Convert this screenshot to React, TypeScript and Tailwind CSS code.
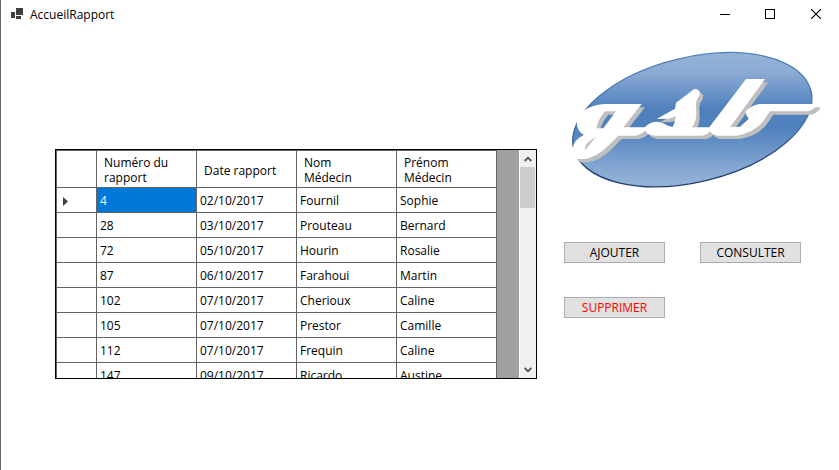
import React from 'react';

interface Rapport {
  numero: number;
  date: string;
  nom: string;
  prenom: string;
}

const rapports: Rapport[] = [
  { numero: 4, date: '02/10/2017', nom: 'Fournil', prenom: 'Sophie' },
  { numero: 28, date: '03/10/2017', nom: 'Prouteau', prenom: 'Bernard' },
  { numero: 72, date: '05/10/2017', nom: 'Hourin', prenom: 'Rosalie' },
  { numero: 87, date: '06/10/2017', nom: 'Farahoui', prenom: 'Martin' },
  { numero: 102, date: '07/10/2017', nom: 'Cherioux', prenom: 'Caline' },
  { numero: 105, date: '07/10/2017', nom: 'Prestor', prenom: 'Camille' },
  { numero: 112, date: '07/10/2017', nom: 'Frequin', prenom: 'Caline' },
  { numero: 147, date: '09/10/2017', nom: 'Ricardo', prenom: 'Austine' }
];

const columns = ['Numéro du\nrapport', 'Date rapport', 'Nom\nMédecin', 'Prénom\nMédecin'];

// One outline is drawn twice: the grey copy below is the drop shadow
const LOGO_SHAPE =
  'M245 192 L140 192 Q110 192 85 204 Q50 220 50 246 Q50 274 72 284 Q36 304 39 326 Q40 350 52 357 L74 357 Q108 352 140 322 L175 287 L228 287 Q242 284 256 272 Q264 286 285 287 L425 287 Q442 286 450 274 Q456 286 475 287 L530 287 Q580 278 608 246 L630 214 L745 214 Q760 210 775 192 L598 192 Q572 196 556 216 Q560 222 560 228 Q566 232 565 238 L540 260 L510 262 L615 117 L558 117 L448 262 L396 262 Q408 246 409 225 L408 188 Q410 176 418 168 L420 156 Q412 144 402 148 L348 188 L345 206 L290 237 L325 236 Q336 234 347 228 Q346 248 338 261 Q322 258 308 249 Q280 238 254 262 L190 262 Z ' +
  'M135 214 L168 214 L130 265 L109 265 Q114 238 135 214 Z ' +
  'M108 290 L82 322 L75 330 Q70 312 108 290 Z';

const GsbLogo: React.FC = () => (
  <svg viewBox="30 24 750 426" className="h-[142px] w-[250px]" role="img" aria-label="gsb">
    <defs>
      <linearGradient id="oval" gradientUnits="userSpaceOnUse" x1="0" y1="36" x2="0" y2="440">
        <stop offset="0" stopColor="#95b3d7" />
        <stop offset="0.15" stopColor="#8cabd4" />
        <stop offset="0.42" stopColor="#4f81bd" />
        <stop offset="0.56" stopColor="#4f81bd" />
        <stop offset="0.9" stopColor="#8cabd4" />
        <stop offset="1" stopColor="#95b3d7" />
      </linearGradient>
      <linearGradient id="rim" gradientUnits="userSpaceOnUse" x1="0" y1="36" x2="0" y2="440">
        <stop offset="0" stopColor="#4f81bd" />
        <stop offset="0.5" stopColor="#4272ae" />
        <stop offset="0.8" stopColor="#1f4478" />
        <stop offset="1" stopColor="#1f3f6e" />
      </linearGradient>
    </defs>
    <path
      d="M41 325 A366 187 -13.6 0 1 753 153 A366 187 -13.6 0 1 41 325 Z"
      fill="url(#oval)"
      stroke="url(#rim)"
      strokeWidth="4" />
    <path d={LOGO_SHAPE} transform="translate(10 10)" fill="#bfbfbf" fillRule="evenodd" />
    <path d={LOGO_SHAPE} fill="#fff" fillRule="evenodd" />
  </svg>
);

const TitleBar: React.FC = () => (
  <header className="flex h-[30px] items-center justify-between pl-[10px]">
    <div className="flex items-center gap-[7px]">
      <svg viewBox="0 0 12 14" className="h-[14px] w-3" shapeRendering="crispEdges" fill="#404040">
        <path d="M5 0h7v7H5zM0 4h4v6H0zM5 8h5v3H5z" />
      </svg>
      <h1 className="text-xs">AccueilRapport</h1>
    </div>
    <div className="flex h-full">
      <button aria-label="Réduire" className="flex w-11 items-center justify-center">
        <svg viewBox="0 0 10 10" className="h-[10px] w-[10px]" shapeRendering="crispEdges">
          <path d="M0 4.5h10" stroke="#000" />
        </svg>
      </button>
      <button aria-label="Agrandir" className="flex w-[46px] items-center justify-center">
        <svg viewBox="0 0 10 10" className="mb-[2px] h-[10px] w-[10px]" shapeRendering="crispEdges">
          <path d="M.5.5h9v9h-9z" fill="none" stroke="#000" />
        </svg>
      </button>
      <button aria-label="Fermer" className="flex w-[46px] items-center justify-center">
        <svg viewBox="0 0 10 10" className="mb-[2px] h-[10px] w-[10px]">
          <path d="M0 0l10 10M10 0L0 10" stroke="#000" strokeWidth="1.2" />
        </svg>
      </button>
    </div>
  </header>
);

const ScrollBar: React.FC = () => (
  <div className="flex w-[17px] flex-col border-x border-l-white border-r-[#f0f0f0] bg-[#f0f0f0]">
    <button aria-label="Défiler vers le haut" className="flex h-[17px] items-center justify-center">
      <svg viewBox="0 0 8 6" className="h-[6px] w-2">
        <path d="M.7 5L4 1.7 7.3 5" fill="none" stroke="#505050" strokeWidth="1.8" />
      </svg>
    </button>
    <div className="h-[41px] bg-[#cdcdcd]" />
    <button aria-label="Défiler vers le bas" className="mt-auto flex h-[17px] items-center justify-center">
      <svg viewBox="0 0 8 6" className="h-[6px] w-2">
        <path d="M.7 1L4 4.3 7.3 1" fill="none" stroke="#505050" strokeWidth="1.8" />
      </svg>
    </button>
  </div>
);

const RapportGrid: React.FC = () => (
  <section className="flex h-[230px] w-[482px] border border-black bg-[#a0a0a0]">
    <div className="flex-1 overflow-hidden">
      <table className="w-[441px] table-fixed border-separate border-spacing-0 border-l border-t border-[#646464] bg-white text-left">
        <thead>
          <tr className="h-[37px]">
            <th className="w-10 border-b border-r border-[#646464]" />
            {columns.map((column) => (
              <th key={column} className="w-[100px] whitespace-pre-line border-b border-r border-[#646464] p-0 pl-[7px] pt-[2px] font-normal leading-[15px]">
                {column}
              </th>
            ))}
          </tr>
        </thead>
        <tbody>
          {rapports.map((rapport, index) => (
            <tr key={rapport.numero} className="h-[25px]">
              <td className="border-b border-r border-[#646464] p-0 pl-[6px] pt-[2px]">
                {index === 0 &&
                  <svg viewBox="0 0 5 9" className="h-[9px] w-[5px]">
                    <path d="M0 0l5 4.5L0 9z" fill="#404040" />
                  </svg>
                }
              </td>
              <td className={`border-b border-r border-[#646464] p-0 pl-[3px] pt-[2px] ${index === 0 ? 'bg-[#0078d7] text-white' : ''}`}>
                {rapport.numero}
              </td>
              <td className="border-b border-r border-[#646464] p-0 pl-[3px] pt-[2px]">{rapport.date}</td>
              <td className="border-b border-r border-[#646464] p-0 pl-[3px] pt-[2px]">{rapport.nom}</td>
              <td className="border-b border-r border-[#646464] p-0 pl-[3px] pt-[2px]">{rapport.prenom}</td>
            </tr>
          ))}
        </tbody>
      </table>
    </div>
    <ScrollBar />
  </section>
);

interface ActionButtonProps {
  label: string;
  danger?: boolean;
}

const ActionButton: React.FC<ActionButtonProps> = ({ label, danger = false }) => (
  <button className={`h-[21px] w-[101px] border border-[#adadad] bg-[#e1e1e1] leading-[19px] ${danger ? 'text-[#ff0000]' : ''}`}>
    {label}
  </button>
);

export default function App() {
  return (
    <div className="min-h-screen border-l border-[#6a6a6a] bg-white font-['Open_Sans','Noto_Sans',sans-serif] text-xs text-black">
      <TitleBar />
      <main className="flex items-start gap-[27px] pl-[54px] pt-[18px]">
        <div className="pt-[101px]">
          <RapportGrid />
        </div>
        <div>
          <div className="pl-[6px]">
            <GsbLogo />
          </div>
          <div className="mt-[52px] grid grid-cols-[101px_101px] gap-x-[35px] gap-y-[34px]">
            <ActionButton label="AJOUTER" />
            <ActionButton label="CONSULTER" />
            <ActionButton label="SUPPRIMER" danger />
          </div>
        </div>
      </main>
    </div>
  );
}
